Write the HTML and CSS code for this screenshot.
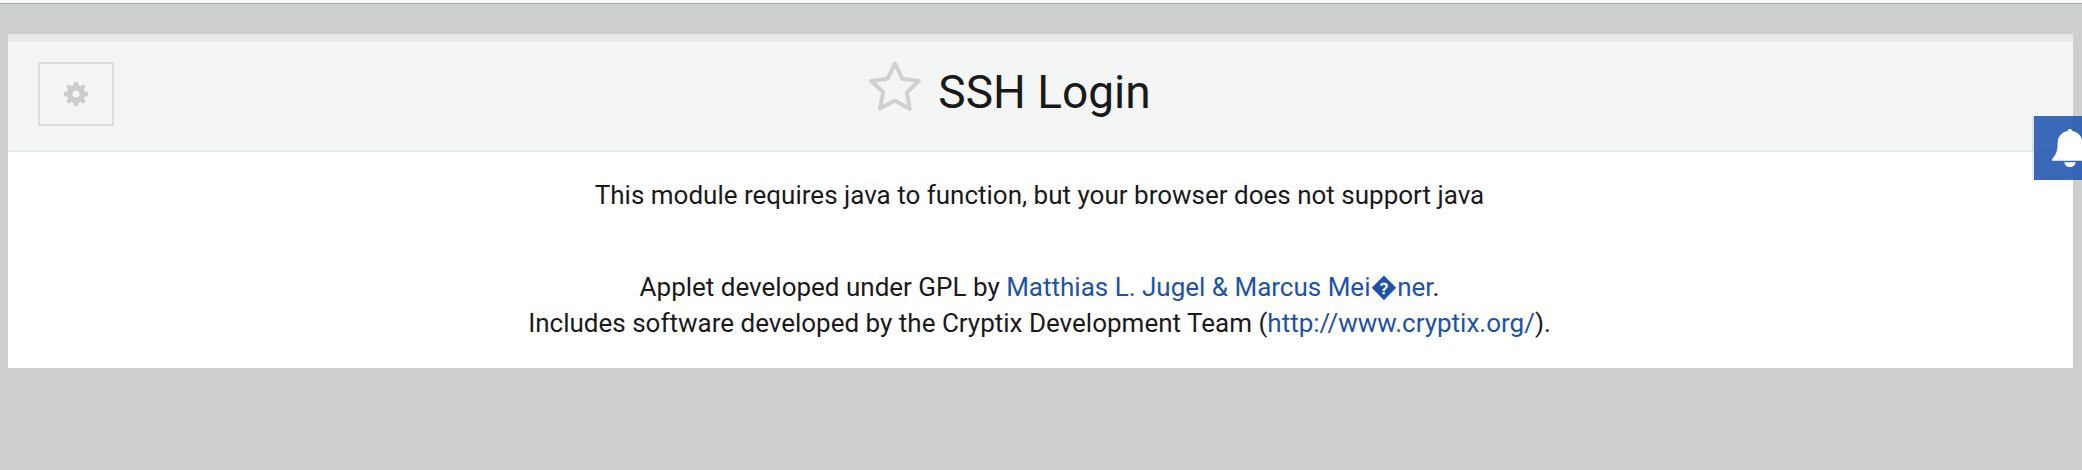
FILE: index.html
```html
<!DOCTYPE html>
<html lang="en">
<head>
<meta charset="utf-8">
<title>SSH Login</title>
<link rel="stylesheet" href="styles.css">
</head>
<body>
<div class="topline"></div>
<main class="panel">
  <header class="head">
    <button class="config" aria-label="Module config">
      <svg class="gear" viewBox="0 0 24 24"><path fill-rule="evenodd" d="M10 0h4l.6 3.200 2.200.9L19.500 2.300l2.200 2.200-1.800 2.700.9 2.200L24 10v4l-3.200.6-.9 2.200 1.800 2.700-2.200 2.200-2.700-1.800-2.200.9L14 24h-4l-.6-3.200-2.200-.9-2.700 1.800-2.200-2.200 1.800-2.700-.9-2.200L0 14v-4l3.200-.6.9-2.200-1.800-2.700 2.200-2.200 2.700 1.800 2.200-.9zM12 8.500a3.500 3.500 0 1 0 0 7 3.500 3.500 0 0 0 0-7z"/></svg>
    </button>
    <h1 class="title">
      <svg class="star" viewBox="0 0 54 52"><path d="M27 3.500l7.300 15.200 16.700 2.200-12.200 11.600 3.100 16.500L27 40.500l-14.900 8 3.100-16.500L3 20.900l16.700-2.200z"/></svg>
      <span>SSH Login</span>
    </h1>
  </header>
  <section class="body">
    <p class="notice">This module requires java to function, but your browser does not support java</p>
    <p class="credits">Applet developed under GPL by <a href="#">Matthias L. Jugel &amp; Marcus Mei�ner</a>.<br>Includes software developed by the Cryptix Development Team (<a href="#">http://www.cryptix.org/</a>).</p>
  </section>
</main>
<aside class="notify">
  <svg class="bell" viewBox="0 0 32 36" preserveAspectRatio="none"><path d="M16 0c1.200 0 2 .8 2.100 1.900C23.500 3 27 7.300 27 13c0 9 2 12 5 15.500.4.500.2 1.500-.8 1.500H.8c-1 0-1.200-1-.8-1.500C3 25 5 22 5 13 5 7.300 8.500 3 13.900 1.900 14 .8 14.800 0 16 0zM11 31.500h10c0 2.500-2.200 4.500-5 4.500s-5-2-5-4.500z"/></svg>
</aside>
</body>
</html>
```

FILE: styles.css
```css
html, body {
  margin: 0;
  height: 470px;
  overflow: hidden;
}
body {
  background: #cdcfce;
  font-family: Roboto, sans-serif;
  color: #1a1a1a;
  padding: 0 9px 0 8px;
  box-sizing: border-box;
}
.topline {
  height: 4px;
  margin: 0 -9px 30px -8px;
  background: #f8f5f5;
  border-bottom: 1px solid #a9a9a9;
  box-sizing: border-box;
}
.panel {
  background: #fff;
  border-top: 8px solid #e8e8e8;
}
.head {
  position: relative;
  height: 100px;
  padding: 0 62px 8px 0;
  background: #f4f6f5;
  border-bottom: 2px solid #e8e8e8;
  display: flex;
  align-items: center;
  justify-content: center;
}
.config {
  position: absolute;
  left: 30px;
  top: 20px;
  width: 76px;
  height: 64px;
  background: transparent;
  border: 2px solid #dcdddd;
  padding: 0;
  display: flex;
  align-items: center;
  justify-content: center;
}
.gear {
  width: 24px;
  height: 24px;
  fill: #cccccc;
}
.title {
  margin: 0;
  display: flex;
  align-items: center;
  gap: 16px;
  font-size: 46px;
  font-weight: 400;
  line-height: 56px;
  color: #191919;
}
.star {
  width: 54px;
  height: 52px;
  margin-top: -12px;
  fill: none;
  stroke: #d0d0d0;
  stroke-width: 4;
  stroke-linejoin: round;
}
.body {
  text-align: center;
  font-size: 26px;
  line-height: 36px;
  height: 216px;
  padding: 25px 2px 0 0;
  box-sizing: border-box;
}
.body p {
  margin: 0;
}
.notice {
  padding-bottom: 56px;
}
a {
  color: #1e52a6;
  text-decoration: none;
}
.notify {
  position: absolute;
  left: 2034px;
  top: 116px;
  width: 48px;
  height: 64px;
  background: rgba(40, 92, 178, .92);
  box-shadow: -2px 0 0 rgba(0, 0, 0, .08);
  overflow: hidden;
}
.bell {
  position: absolute;
  left: 18px;
  top: 13px;
  width: 36px;
  height: 38px;
  fill: #fff;
}
```
